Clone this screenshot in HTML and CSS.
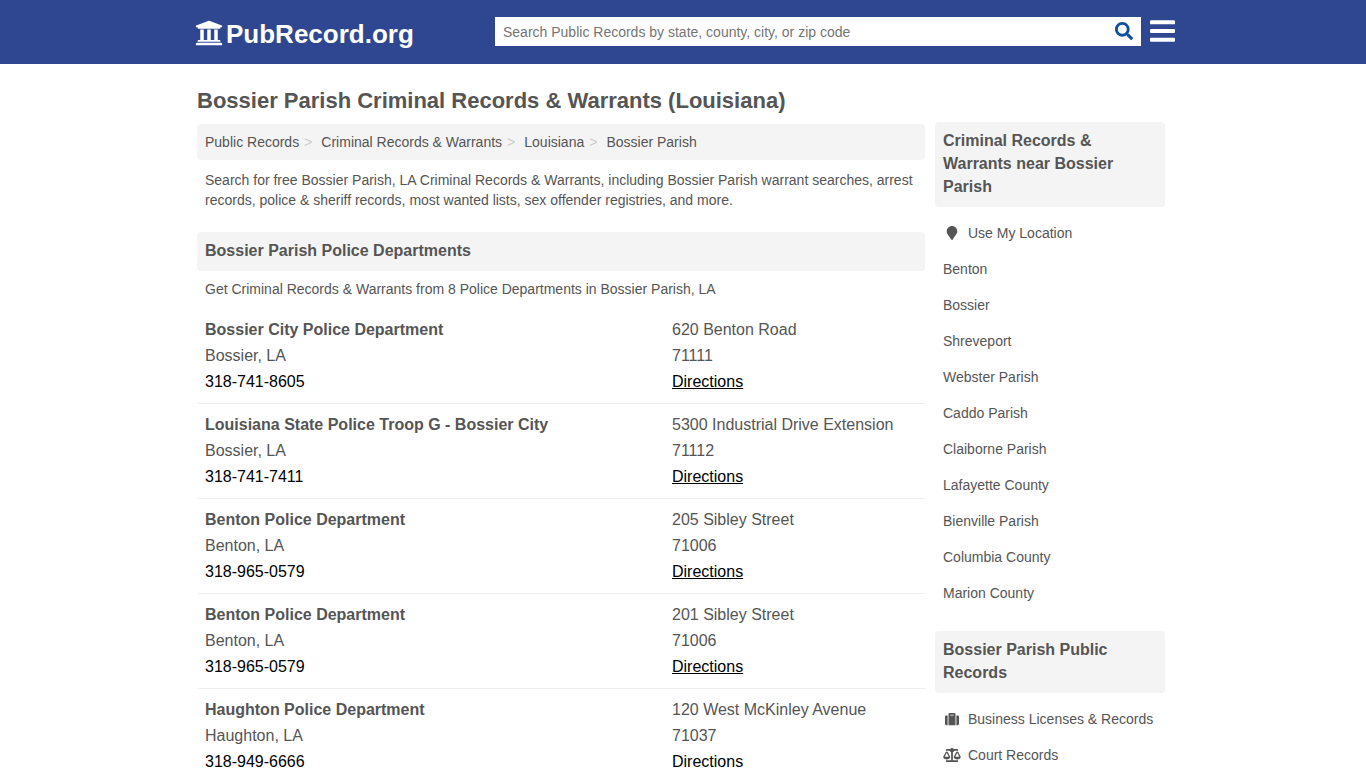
FILE: index.html
```html
<!DOCTYPE html>
<html lang="en">
<head>
    <meta charset="utf-8">
    <meta name="viewport" content="width=device-width, initial-scale=1">
    <title>Bossier Parish Criminal Records &amp; Warrants (Louisiana)</title>
    <link rel="stylesheet" href="styles.css">
</head>
<body>
    <header class="header">
        <div class="header-inner">
            <a class="logo" href="#">
                <svg class="logo-icon" viewBox="0 0 512 512" aria-hidden="true"><path d="M496 128v16a8 8 0 0 1-8 8h-24v12c0 6.627-5.373 12-12 12H60c-6.627 0-12-5.373-12-12v-12H24a8 8 0 0 1-8-8v-16a8 8 0 0 1 4.941-7.392l232-88a7.996 7.996 0 0 1 6.118 0l232 88A8 8 0 0 1 496 128zm-24 304H40c-13.255 0-24 10.745-24 24v16a8 8 0 0 0 8 8h464a8 8 0 0 0 8-8v-16c0-13.255-10.745-24-24-24zM96 192v192H60c-6.627 0-12 5.373-12 12v20h416v-20c0-6.627-5.373-12-12-12h-36V192h-64v192h-64V192h-64v192h-64V192H96z"/></svg>
                <span>PubRecord.org</span>
            </a>
            <form class="search">
                <input class="search-input" type="text" placeholder="Search Public Records by state, county, city, or zip code" aria-label="Search Public Records">
                <button class="search-btn" type="submit" aria-label="Search">
                    <svg class="search-icon" viewBox="0 0 512 512" aria-hidden="true"><path d="M505 442.7L405.3 343c-4.5-4.5-10.6-7-17-7H372c27.6-35.3 44-79.7 44-128C416 93.1 322.9 0 208 0S0 93.1 0 208s93.1 208 208 208c48.3 0 92.7-16.4 128-44v16.3c0 6.4 2.5 12.5 7 17l99.7 99.7c9.4 9.4 24.6 9.4 33.9 0l28.3-28.3c9.4-9.4 9.4-24.6.1-34zM208 336c-70.7 0-128-57.2-128-128 0-70.7 57.2-128 128-128 70.7 0 128 57.2 128 128 0 70.7-57.2 128-128 128z"/></svg>
                </button>
            </form>
            <button class="menu-btn" type="button" aria-label="Menu">
                <svg class="menu-icon" viewBox="0 0 448 384" aria-hidden="true"><path d="M16 72h416c9 0 16-7 16-16V16c0-9-7-16-16-16H16C7 0 0 7 0 16v40c0 9 7 16 16 16zm0 156h416c9 0 16-7 16-16v-40c0-9-7-16-16-16H16c-9 0-16 7-16 16v40c0 9 7 16 16 16zm0 156h416c9 0 16-7 16-16v-40c0-9-7-16-16-16H16c-9 0-16 7-16 16v40c0 9 7 16 16 16z"/></svg>
            </button>
        </div>
    </header>

    <div class="container">
        <h1>Bossier Parish Criminal Records &amp; Warrants (Louisiana)</h1>
        <div class="columns">
            <main class="main">
                <ol class="breadcrumb">
                    <li><a href="#">Public Records</a></li>
                    <li><a href="#">Criminal Records &amp; Warrants</a></li>
                    <li><a href="#">Louisiana</a></li>
                    <li><a href="#">Bossier Parish</a></li>
                </ol>
                <p class="intro">Search for free Bossier Parish, LA Criminal Records &amp; Warrants, including Bossier Parish warrant searches, arrest records, police &amp; sheriff records, most wanted lists, sex offender registries, and more.</p>

                <h2 class="section-title">Bossier Parish Police Departments</h2>
                <p class="summary">Get Criminal Records &amp; Warrants from 8 Police Departments in Bossier Parish, LA</p>

                <div class="listing">
                    <div>
                        <h3>Bossier City Police Department</h3>
                        <p>Bossier, LA</p>
                        <a class="phone" href="tel:318-741-8605">318-741-8605</a>
                    </div>
                    <div>
                        <p>620 Benton Road</p>
                        <p>71111</p>
                        <a class="directions" href="#">Directions</a>
                    </div>
                </div>
                <div class="listing">
                    <div>
                        <h3>Louisiana State Police Troop G - Bossier City</h3>
                        <p>Bossier, LA</p>
                        <a class="phone" href="tel:318-741-7411">318-741-7411</a>
                    </div>
                    <div>
                        <p>5300 Industrial Drive Extension</p>
                        <p>71112</p>
                        <a class="directions" href="#">Directions</a>
                    </div>
                </div>
                <div class="listing">
                    <div>
                        <h3>Benton Police Department</h3>
                        <p>Benton, LA</p>
                        <a class="phone" href="tel:318-965-0579">318-965-0579</a>
                    </div>
                    <div>
                        <p>205 Sibley Street</p>
                        <p>71006</p>
                        <a class="directions" href="#">Directions</a>
                    </div>
                </div>
                <div class="listing">
                    <div>
                        <h3>Benton Police Department</h3>
                        <p>Benton, LA</p>
                        <a class="phone" href="tel:318-965-0579">318-965-0579</a>
                    </div>
                    <div>
                        <p>201 Sibley Street</p>
                        <p>71006</p>
                        <a class="directions" href="#">Directions</a>
                    </div>
                </div>
                <div class="listing">
                    <div>
                        <h3>Haughton Police Department</h3>
                        <p>Haughton, LA</p>
                        <a class="phone" href="tel:318-949-6666">318-949-6666</a>
                    </div>
                    <div>
                        <p>120 West McKinley Avenue</p>
                        <p>71037</p>
                        <a class="directions" href="#">Directions</a>
                    </div>
                </div>
            </main>

            <aside class="sidebar">
                <h2 class="section-title">Criminal Records &amp; Warrants near Bossier Parish</h2>
                <ul class="side-list">
                    <li><a href="#"><svg class="side-icon" viewBox="-64 0 512 512" aria-hidden="true"><path d="M172.268 501.67C26.97 291.031 0 269.413 0 192 0 85.961 85.961 0 192 0s192 85.961 192 192c0 77.413-26.97 99.031-172.268 309.67-9.535 13.774-29.93 13.773-39.464 0z"/></svg>Use My Location</a></li>
                    <li><a href="#">Benton</a></li>
                    <li><a href="#">Bossier</a></li>
                    <li><a href="#">Shreveport</a></li>
                    <li><a href="#">Webster Parish</a></li>
                    <li><a href="#">Caddo Parish</a></li>
                    <li><a href="#">Claiborne Parish</a></li>
                    <li><a href="#">Lafayette County</a></li>
                    <li><a href="#">Bienville Parish</a></li>
                    <li><a href="#">Columbia County</a></li>
                    <li><a href="#">Marion County</a></li>
                </ul>

                <h2 class="section-title">Bossier Parish Public Records</h2>
                <ul class="side-list">
                    <li><a href="#"><svg class="side-icon" viewBox="0 0 512 512" aria-hidden="true"><path d="M128 480h256V80c0-26.5-21.5-48-48-48H176c-26.5 0-48 21.5-48 48v400zm64-384h128v32H192V96zm320 80v256c0 26.5-21.5 48-48 48h-48V128h48c26.5 0 48 21.5 48 48zM96 480H48c-26.5 0-48-21.5-48-48V176c0-26.5 21.5-48 48-48h48v352z"/></svg>Business Licenses &amp; Records</a></li>
                    <li><a href="#"><svg class="side-icon" viewBox="0 0 640 512" aria-hidden="true"><path d="M256 336h-.02c0-16.18 1.34-8.73-85.05-181.51-17.65-35.29-68.19-35.36-85.87 0C-2.06 328.75.02 320.33.02 336H0c0 44.18 57.31 80 128 80s128-35.82 128-80zM128 176l72 144H56l72-144zm511.98 160c0-16.18 1.34-8.73-85.05-181.51-17.65-35.29-68.19-35.36-85.87 0-87.12 174.26-85.04 165.84-85.04 181.51H384c0 44.18 57.31 80 128 80s128-35.82 128-80h-.02zM440 320l72-144 72 144H440zm88 128H352V153.25c23.51-10.29 41.16-31.48 46.39-57.25H528c8.84 0 16-7.16 16-16V48c0-8.84-7.16-16-16-16H383.64C369.04 12.68 346.09 0 320 0s-49.04 12.68-63.64 32H112c-8.84 0-16 7.16-16 16v32c0 8.84 7.16 16 16 16h129.61c5.23 25.76 22.87 46.96 46.39 57.25V448H112c-8.84 0-16 7.16-16 16v32c0 8.84 7.16 16 16 16h416c8.84 0 16-7.16 16-16v-32c0-8.84-7.16-16-16-16z"/></svg>Court Records</a></li>
                </ul>
            </aside>
        </div>
    </div>
</body>
</html>
```
FILE: styles.css
```css
* {
    box-sizing: border-box;
}
body {
    margin: 0;
    font-family: "Liberation Sans", Arial, Helvetica, sans-serif;
    font-size: 14px;
    line-height: 20px;
    color: #555;
    background: #fff;
}
h1, h2, h3, p, ul, ol {
    margin: 0;
    padding: 0;
}
ul, ol {
    list-style: none;
}
a {
    color: inherit;
    text-decoration: none;
}
svg {
    display: block;
    flex: none;
    fill: currentColor;
}
button {
    padding: 0;
    border: 0;
    background: none;
    cursor: pointer;
}

/* header */
.header {
    background: #2f4790;
}
.header-inner {
    display: flex;
    align-items: center;
    max-width: 984px;
    height: 64px;
    margin: 0 auto;
    padding: 0 0 2px 4px;
}
.logo {
    display: flex;
    align-items: flex-end;
    gap: 3px;
    flex: 1;
    padding-top: 6px;
    color: #fff;
    font-size: 26px;
    font-weight: bold;
    line-height: 30px;
}
.logo-icon {
    width: 28px;
    height: 28px;
    margin-bottom: 2px;
}
.search {
    display: flex;
    width: 646px;
    height: 29px;
    background: #fff;
}
.search-input {
    flex: 1;
    min-width: 0;
    padding: 1px 8px 0;
    border: 0;
    background: none;
    font: inherit;
    color: #555;
}
.search-input::placeholder {
    color: #757575;
}
.search-btn {
    padding: 0 8px;
    color: #0c50a0;
}
.search-icon {
    width: 18px;
    height: 18px;
}
.menu-btn {
    margin-left: 9px;
    color: #fff;
}
.menu-icon {
    width: 25px;
    height: 22px;
}

/* page */
.container {
    max-width: 980px;
    margin: 0 auto;
    padding: 22px 8px 0 4px;
}
h1 {
    font-size: 22px;
    line-height: 30px;
}
.columns {
    display: flex;
    align-items: flex-start;
    gap: 10px;
    padding-top: 6px;
}
.main {
    flex: 1;
    min-width: 0;
    padding-top: 2px;
}
.breadcrumb {
    display: flex;
    padding: 8px;
    border-radius: 4px;
    background: #f4f4f4;
}
.breadcrumb li + li::before {
    content: ">";
    padding: 0 9px 0 5px;
    color: #ccc;
}
.intro {
    padding: 10px 8px 22px;
}
.section-title {
    padding: 7px 8px 9px;
    border-radius: 4px;
    background: #f4f4f4;
    font-size: 16px;
    line-height: 23px;
}
.summary {
    padding: 8px 8px 10px;
}
.listing {
    display: grid;
    grid-template-columns: 467px 1fr;
    padding: 8px;
    border-bottom: 1px solid #eee;
    font-size: 16px;
    line-height: 26px;
}
.listing h3 {
    font-size: 16px;
}
.phone, .directions {
    color: #000;
}
.directions {
    text-decoration: underline;
}

/* sidebar */
.sidebar {
    width: 230px;
}
.side-list {
    padding: 8px 0 20px;
}
.side-list a {
    display: flex;
    align-items: center;
    padding: 8px;
}
.side-icon {
    width: 18px;
    height: 14px;
    margin-right: 7px;
}
```
